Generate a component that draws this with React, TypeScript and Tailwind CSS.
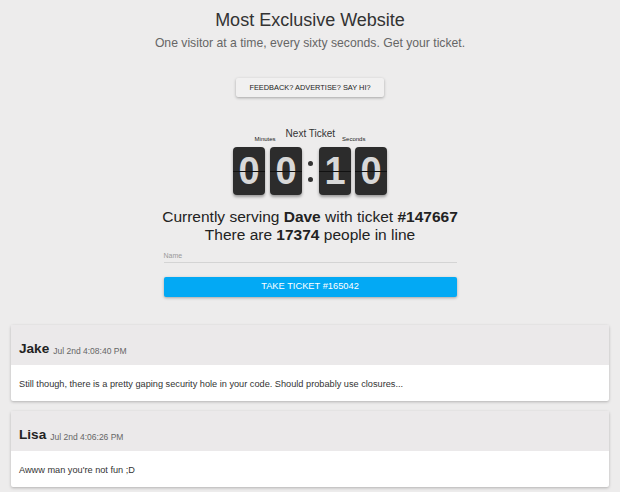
const comments = [
  {
    name: "Jake",
    date: "Jul 2nd 4:08:40 PM",
    text: "Still though, there is a pretty gaping security hole in your code. Should probably use closures...",
  },
  {
    name: "Lisa",
    date: "Jul 2nd 4:06:26 PM",
    text: "Awww man you're not fun ;D",
  },
]

const FlipDigit = ({ value }: { value: string }) => (
  <div className="relative w-[32px] h-[48px] rounded-[4px] bg-[#2c2c2c] shadow-[0_2px_3px_rgba(0,0,0,0.35)] flex items-center justify-center">
    <span className="text-[38px] leading-none font-bold text-[#d8d8d8]">{value}</span>
    <div className="absolute left-0 right-0 top-1/2 h-px bg-[#111]" />
  </div>
)

export default function App() {
  return (
    <div
      className="min-h-screen bg-[#edecec] text-[#333] pt-[9px] pb-4"
      style={{ fontFamily: '"Liberation Sans", Arial, sans-serif' }}
    >
      <header className="text-center">
        <h1 className="text-[18px] leading-[22px] text-[#333]">Most Exclusive Website</h1>
        <p className="mt-[5px] text-[12.2px] leading-[15px] text-[#666]">
          One visitor at a time, every sixty seconds. Get your ticket.
        </p>
      </header>

      <div className="flex justify-center mt-[27px]">
        <button className="w-[148px] h-[19px] bg-[#f1f0f0] shadow-[0_1px_3px_rgba(0,0,0,0.3)] rounded-[2px] text-[7.4px] text-[#222] uppercase">
          Feedback? Advertise? Say hi?
        </button>
      </div>

      <div className="flex flex-col items-center mt-[31px]">
        <div className="flex items-start">
          <div className="mt-[7px] mr-[10px] text-[6px] leading-[8px] text-[#222]">Minutes</div>
          <div className="text-[10px] leading-[12px] text-[#333]">Next Ticket</div>
          <div className="mt-[7px] ml-[7px] text-[6px] leading-[8px] text-[#222]">Seconds</div>
        </div>
        <div className="flex mt-[4px]">
          <div className="flex gap-[5px]">
            <FlipDigit value="0" />
            <FlipDigit value="0" />
          </div>
          <div className="w-[17px] h-[48px] flex flex-col items-center justify-center gap-[11px]">
            <div className="w-[5px] h-[5px] rounded-full bg-[#333]" />
            <div className="w-[5px] h-[5px] rounded-full bg-[#333]" />
          </div>
          <div className="flex gap-[4px]">
            <FlipDigit value="1" />
            <FlipDigit value="0" />
          </div>
        </div>
      </div>

      <div className="text-center mt-[13px] text-[15.5px] leading-[18px] text-[#222]">
        <p>
          Currently serving <b>Dave</b> with ticket <b>#147667</b>
        </p>
        <p>
          There are <b>17374</b> people in line
        </p>
      </div>

      <div className="w-[293px] mx-auto mt-[8px]">
        <div className="text-[7px] leading-[8px] text-[#999]">Name</div>
        <div className="mt-[2px] h-px bg-[#d4d4d4]" />
        <button className="mt-[14px] w-full h-[20px] bg-[#03a9f4] text-white text-[9.3px] uppercase shadow-[0_1px_3px_rgba(0,0,0,0.3)] rounded-[2px]">
          Take Ticket #165042
        </button>
      </div>

      <div className="mx-[11px] mt-[28px] flex flex-col gap-[10px]">
        {comments.map((c) => (
          <div key={c.name} className="bg-white shadow-[0_1px_3px_rgba(0,0,0,0.25)] rounded-[2px]">
            <div className="h-[40px] bg-[#ebe9ea] flex items-end px-[8px] pb-[8px]">
              <span className="text-[13.6px] leading-[16px] font-bold text-[#222]">{c.name}</span>
              <span className="ml-[4px] text-[8.5px] leading-[12px] text-[#666]">{c.date}</span>
            </div>
            <div className="h-[36px] flex items-center px-[8px] pt-[3px] text-[9.2px] text-[#333]">{c.text}</div>
          </div>
        ))}
      </div>
    </div>
  )
}
